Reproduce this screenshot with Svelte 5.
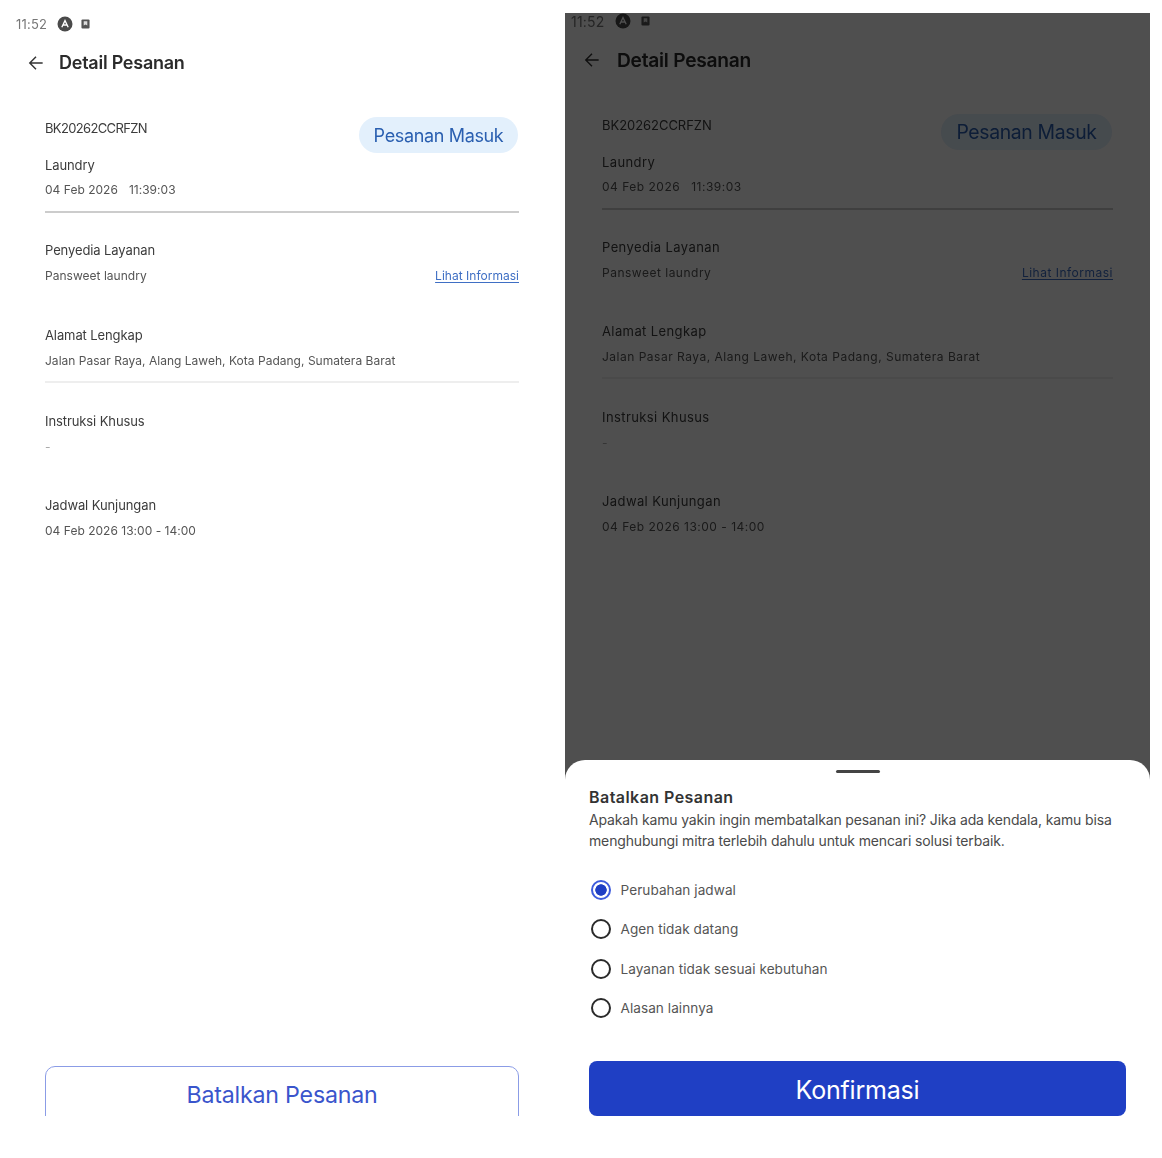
<script>
  const reasons = ['Perubahan jadwal', 'Agen tidak datang', 'Layanan tidak sesuai kebutuhan', 'Alasan lainnya'];
</script>

{#snippet screen()}
  <div class="status">
    <span class="clock">11:52</span>
    <svg class="badge" viewBox="0 0 16 16" aria-hidden="true"><circle cx="8" cy="8" r="7.5" fill="#4a4a4a"/><path d="M4.8 11.2 8 4.6l3.2 6.6M6 9h4" fill="none" stroke="#fff" stroke-width="1.3"/></svg>
    <svg class="note" viewBox="0 0 10 11" aria-hidden="true"><rect x="0.5" y="0.5" width="9" height="10" rx="1.2" fill="#555"/><path d="M3 2.5h4v4.8L5 6 3 7.3z" fill="#ddd"/></svg>
  </div>
  <header class="bar">
    <svg class="back" viewBox="0 0 18 18" aria-hidden="true"><path d="M16.5 9H2M9 2 2 9l7 7" fill="none" stroke="#333" stroke-width="1.6"/></svg>
    <h1>Detail Pesanan</h1>
  </header>
  <div class="content">
    <section class="top">
      <div>
        <p class="t code">BK20262CCRFZN</p>
        <p class="t laundry">Laundry</p>
        <p class="s date"><span>04 Feb 2026</span><span>11:39:03</span></p>
      </div>
      <span class="pill">Pesanan Masuk</span>
    </section>
    <section class="block first">
      <p class="t">Penyedia Layanan</p>
      <div class="split">
        <p class="s">Pansweet laundry</p>
        <span class="link">Lihat Informasi</span>
      </div>
    </section>
    <section class="block address">
      <p class="t">Alamat Lengkap</p>
      <p class="s">Jalan Pasar Raya, Alang Laweh, Kota Padang, Sumatera Barat</p>
    </section>
    <section class="block after-rule">
      <p class="t">Instruksi Khusus</p>
      <p class="s dash">-</p>
    </section>
    <section class="block last">
      <p class="t">Jadwal Kunjungan</p>
      <p class="s">04 Feb 2026 13:00 - 14:00</p>
    </section>
  </div>
{/snippet}

<main class="page">
  <div class="panel left">
    {@render screen()}
    <div class="cut">
      <button class="outline" type="button">Batalkan Pesanan</button>
    </div>
  </div>

  <div class="panel right">
    {@render screen()}
    <div class="scrim"></div>
    <aside class="sheet">
      <div class="handle"></div>
      <h2>Batalkan Pesanan</h2>
      <p class="desc">Apakah kamu yakin ingin membatalkan pesanan ini? Jika ada kendala, kamu bisa menghubungi mitra terlebih dahulu untuk mencari solusi terbaik.</p>
      <ul class="reasons">
        {#each reasons as reason, i}
          <li><span class="radio" class:on={i === 0}></span>{reason}</li>
        {/each}
      </ul>
      <button class="primary" type="button">Konfirmasi</button>
    </aside>
  </div>
</main>

<style>
  :global(body) { margin: 0; background: #fff; }
  .page {
    display: flex;
    width: 1162px;
    height: 1158px;
    overflow: hidden;
    font-family: Inter, "Liberation Sans", sans-serif;
    color: #333;
    filter: blur(0.7px);
  }
  p, h1, h2, ul { margin: 0; padding: 0; }
  .panel { display: flex; flex-direction: column; box-sizing: border-box; }
  .left {
    width: 565px;
    padding: 16px 0 42px;
    --pad-status: 16px;
    --pad-bar: 28px;
    --pad: 45px;
    --w: 474px;
    --clock-w: 33px;
    --clock-size: 13px;
    --note-gap: 0px;
    --back-gap: 15px;
    --t-ls: -0.1px;
    --code-ls: -0.65px;
    --s-ls: 0.02px;
    --title-size: 18px;
    --title-ls: -0.25px;
    --pill-w: 159px;
    --pill-size: 18px;
    --address-gap: 39px;
  }
  .right {
    position: relative;
    width: 585px;
    height: 1145px;
    margin-top: 13px;
    overflow: hidden;
    --pad-status: 6px;
    --pad-bar: 19px;
    --pad: 37px;
    --w: 511px;
    --clock-w: 36px;
    --clock-size: 14px;
    --note-gap: 2px;
    --back-gap: 17px;
    --t-ls: 0.4px;
    --code-ls: -0.05px;
    --s-ls: 0.5px;
    --title-size: 19.2px;
    --title-ls: -0.25px;
    --pill-w: 171px;
    --pill-size: 19.4px;
    --address-gap: 38px;
  }
  .status {
    display: flex;
    align-items: center;
    height: 16px;
    padding-left: var(--pad-status);
    gap: 8px;
  }
  .clock { font-size: var(--clock-size); color: #777; letter-spacing: 0.2px; width: var(--clock-w); }
  .badge { width: 16px; height: 16px; }
  .note { width: 9px; height: 10px; margin-left: var(--note-gap); }
  .bar {
    display: flex;
    align-items: center;
    height: 40px;
    margin-top: 11px;
    padding-left: var(--pad-bar);
  }
  .back { width: 16px; height: 16px; margin-right: var(--back-gap); }
  h1 {
    font-size: var(--title-size);
    font-weight: 600;
    letter-spacing: var(--title-ls);
    color: #2b2b2b;
    line-height: 24px;
  }
  .content {
    width: var(--w);
    margin: 35px 0 0 var(--pad);
  }
  .top {
    display: flex;
    justify-content: space-between;
    align-items: flex-start;
    padding-bottom: 11px;
    border-bottom: 2px solid #ccc;
  }
  .t { font-size: 13px; line-height: 20px; letter-spacing: var(--t-ls); color: #3c3c3c; }
  .code { letter-spacing: var(--code-ls); }
  .s { font-size: 12px; line-height: 20px; margin-top: 6px; letter-spacing: var(--s-ls); color: #555; }
  .laundry { margin-top: 17px; }
  .date { margin-top: 5px; display: flex; gap: 11px; }
  .pill {
    box-sizing: border-box;
    width: var(--pill-w);
    height: 36px;
    margin-top: -1px;
    margin-right: 1px;
    border-radius: 18px;
    background: #e3f0fc;
    color: #2a5fb0;
    font-size: var(--pill-size);
    line-height: 37px;
    text-align: center;
    letter-spacing: -0.35px;
    white-space: nowrap;
  }
  .block { margin-top: 39px; }
  .block.first { margin-top: 27px; }
  .block.address { margin-top: var(--address-gap); padding-bottom: 10px; border-bottom: 2px solid #eee; }
  .block.after-rule { margin-top: 28px; }
  .block.last { margin-top: 38px; }
  .dash { color: #aaa; }
  .split { display: flex; justify-content: space-between; }
  .link {
    margin-top: 6px;
    font-size: 12px;
    line-height: 20px;
    letter-spacing: var(--s-ls);
    color: #3f6fc4;
    text-decoration: underline;
    text-underline-offset: 2px;
  }
  .cut {
    width: 474px;
    height: 50px;
    margin: auto 0 0 45px;
    overflow: hidden;
  }
  .outline {
    display: block;
    box-sizing: border-box;
    width: 100%;
    height: 80px;
    padding: 0 0 20px;
    border: 1.5px solid #8b9ce6;
    border-radius: 10px;
    background: #fff;
    color: #3a55cc;
    font: 400 23.2px/1 Inter, "Liberation Sans", sans-serif;
    letter-spacing: -0.2px;
  }
  .scrim {
    position: absolute;
    inset: 0;
    background: rgba(0, 0, 0, 0.69);
  }
  .sheet {
    position: absolute;
    left: 0;
    right: 0;
    top: 747px;
    bottom: 0;
    display: flex;
    flex-direction: column;
    box-sizing: border-box;
    padding: 0 24px;
    background: #fff;
    border-radius: 20px 20px 0 0;
  }
  .handle {
    align-self: center;
    width: 44px;
    height: 3px;
    margin-top: 10px;
    border-radius: 2px;
    background: #444;
  }
  h2 {
    margin-top: 13px;
    font-size: 16px;
    line-height: 22px;
    font-weight: 600;
    color: #333;
    letter-spacing: 0.45px;
  }
  .desc {
    margin-top: 1px;
    font-size: 14px;
    line-height: 21px;
    color: #4a4a4a;
    letter-spacing: -0.15px;
  }
  .reasons { list-style: none; margin-top: 19px; }
  .reasons li {
    display: flex;
    align-items: center;
    height: 39.5px;
    font-size: 13.6px;
    letter-spacing: 0.05px;
    color: #555;
  }
  .radio {
    box-sizing: border-box;
    width: 20px;
    height: 20px;
    margin: 0 9.5px 0 2px;
    border: 2.4px solid #2a2a2a;
    border-radius: 50%;
    background: #fff;
  }
  .radio.on {
    border-color: #3d5bdc;
    background: radial-gradient(circle, #1f3fc4 0 5.4px, #fff 6px);
  }
  .primary {
    width: 537px;
    height: 55px;
    margin-top: 33px;
    padding: 3px 0 0;
    border: 0;
    border-radius: 8px;
    background: #1f3fc4;
    color: #fff;
    font: 400 25px/1 Inter, "Liberation Sans", sans-serif;
    letter-spacing: -0.2px;
  }
</style>
